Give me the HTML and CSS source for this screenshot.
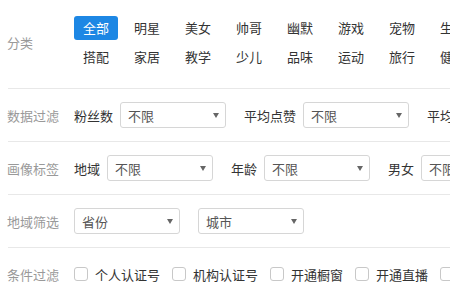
FILE: index.html
```html
<!DOCTYPE html>
<html>
<head>
  <title>筛选</title>
  <link rel="stylesheet" href="styles.css">
</head>
<body>
  <div class="filters">

    <div class="row row-cat">
      <div class="row-label">分类</div>
      <div class="cat-grid">
        <a class="cat active">全部</a>
        <a class="cat">明星</a>
        <a class="cat">美女</a>
        <a class="cat">帅哥</a>
        <a class="cat">幽默</a>
        <a class="cat">游戏</a>
        <a class="cat">宠物</a>
        <a class="cat">生活</a>
        <a class="cat">搭配</a>
        <a class="cat">家居</a>
        <a class="cat">教学</a>
        <a class="cat">少儿</a>
        <a class="cat">品味</a>
        <a class="cat">运动</a>
        <a class="cat">旅行</a>
        <a class="cat">健身</a>
      </div>
    </div>

    <div class="row">
      <div class="row-label">数据过滤</div>
      <div class="group">
        <span class="field-name">粉丝数</span>
        <span class="select-wrap"><select><option>不限</option></select></span>
      </div>
      <div class="group">
        <span class="field-name">平均点赞</span>
        <span class="select-wrap"><select><option>不限</option></select></span>
      </div>
      <div class="group">
        <span class="field-name">平均评论</span>
        <span class="select-wrap"><select><option>不限</option></select></span>
      </div>
    </div>

    <div class="row">
      <div class="row-label">画像标签</div>
      <div class="group">
        <span class="field-name">地域</span>
        <span class="select-wrap"><select><option>不限</option></select></span>
      </div>
      <div class="group">
        <span class="field-name">年龄</span>
        <span class="select-wrap"><select><option>不限</option></select></span>
      </div>
      <div class="group">
        <span class="field-name">男女</span>
        <span class="select-wrap"><select><option>不限</option></select></span>
      </div>
    </div>

    <div class="row">
      <div class="row-label">地域筛选</div>
      <div class="group">
        <span class="select-wrap"><select><option>省份</option></select></span>
      </div>
      <div class="group">
        <span class="select-wrap"><select><option>城市</option></select></span>
      </div>
    </div>

    <div class="row row-last">
      <div class="row-label">条件过滤</div>
      <label class="check"><input type="checkbox"> 个人认证号</label>
      <label class="check"><input type="checkbox"> 机构认证号</label>
      <label class="check"><input type="checkbox"> 开通橱窗</label>
      <label class="check"><input type="checkbox"> 开通直播</label>
      <label class="check"><input type="checkbox"> 企业号</label>
    </div>

  </div>
</body>
</html>
```

FILE: styles.css
```css
body {
  margin: 0;
  background: #fff;
  font-family: "Noto Sans CJK SC", "Noto Sans", sans-serif;
  font-size: 13px;
  color: #333;
  overflow: hidden;
}

.filters {
  margin-left: 8px;
  width: 900px;
}

.row {
  display: flex;
  align-items: center;
  padding: 13px 0;
  border-bottom: 1px solid #e8e8e8;
  white-space: nowrap;
}

.row-cat {
  padding: 16px 0 19px;
}

.row-last {
  border-bottom: none;
}

.row-label {
  width: 67px;
  flex-shrink: 0;
  color: #999;
  margin-left: -1px;
}

/* category grid */
.cat-grid {
  display: grid;
  grid-template-columns: repeat(8, 44px);
  column-gap: 7px;
  row-gap: 5px;
}

.cat {
  height: 24px;
  line-height: 24px;
  text-align: center;
  border-radius: 3px;
  color: #333;
  cursor: pointer;
}

.cat.active {
  background: #1d87e4;
  color: #fff;
}

/* selects */
.group {
  display: flex;
  align-items: center;
  margin-right: 18px;
}

.field-name {
  margin-right: 7px;
}

.select-wrap {
  position: relative;
  display: inline-block;
}

.select-wrap::after {
  content: "";
  position: absolute;
  right: 7px;
  top: 11px;
  border-left: 3px solid transparent;
  border-right: 3px solid transparent;
  border-top: 5px solid #666;
  pointer-events: none;
}

select {
  appearance: none;
  -webkit-appearance: none;
  width: 106px;
  height: 26px;
  padding: 0 7px;
  border: 1px solid #d6d6d6;
  border-radius: 3px;
  background: #fff;
  font-family: inherit;
  font-size: 13px;
  color: #555;
}

/* checkboxes */
.check {
  display: flex;
  align-items: center;
  height: 26px;
  margin-right: 12px;
}

.check input {
  appearance: none;
  -webkit-appearance: none;
  width: 14px;
  height: 14px;
  margin: 0 7px 0 0;
  border: 1px solid #c8c8c8;
  border-radius: 3px;
  background: #fff;
}
```
